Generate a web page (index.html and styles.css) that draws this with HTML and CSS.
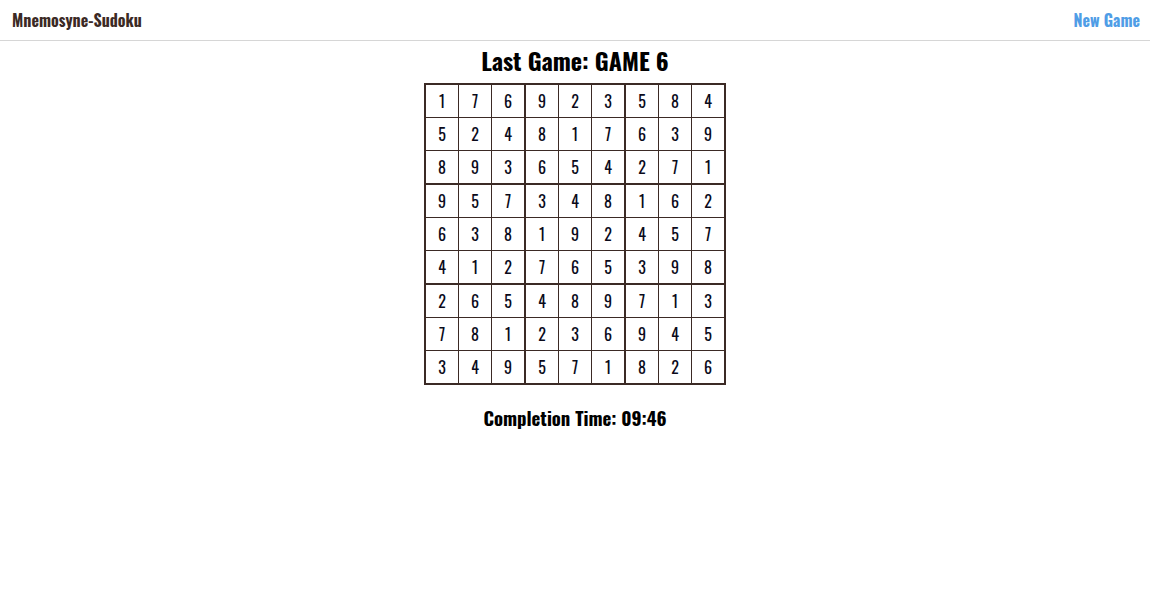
FILE: index.html
```html
<!DOCTYPE html>
<html>
<head>
<meta charset="utf-8">
<link rel="stylesheet" href="styles.css">
</head>
<body>
<nav class="navbar">
  <span class="brand">Mnemosyne-Sudoku</span>
  <a class="new-game" href="#">New Game</a>
</nav>
<main class="main">
  <h1 class="title">Last Game: GAME 6</h1>
  <table class="board">
    <tr><td>1</td><td>7</td><td>6</td><td>9</td><td>2</td><td>3</td><td>5</td><td>8</td><td>4</td></tr>
    <tr><td>5</td><td>2</td><td>4</td><td>8</td><td>1</td><td>7</td><td>6</td><td>3</td><td>9</td></tr>
    <tr class="box-end"><td>8</td><td>9</td><td>3</td><td>6</td><td>5</td><td>4</td><td>2</td><td>7</td><td>1</td></tr>
    <tr><td>9</td><td>5</td><td>7</td><td>3</td><td>4</td><td>8</td><td>1</td><td>6</td><td>2</td></tr>
    <tr><td>6</td><td>3</td><td>8</td><td>1</td><td>9</td><td>2</td><td>4</td><td>5</td><td>7</td></tr>
    <tr class="box-end"><td>4</td><td>1</td><td>2</td><td>7</td><td>6</td><td>5</td><td>3</td><td>9</td><td>8</td></tr>
    <tr><td>2</td><td>6</td><td>5</td><td>4</td><td>8</td><td>9</td><td>7</td><td>1</td><td>3</td></tr>
    <tr><td>7</td><td>8</td><td>1</td><td>2</td><td>3</td><td>6</td><td>9</td><td>4</td><td>5</td></tr>
    <tr><td>3</td><td>4</td><td>9</td><td>5</td><td>7</td><td>1</td><td>8</td><td>2</td><td>6</td></tr>
  </table>
  <p class="time">Completion Time: 09:46</p>
</main>
</body>
</html>
```
FILE: styles.css
```css
html, body {
  margin: 0;
  padding: 0;
  background: #fff;
}
body {
  font-family: "Oswald", "DejaVu Sans Condensed", "Liberation Sans", sans-serif;
  color: #000;
}
.navbar {
  height: 40px;
  border-bottom: 1px solid #d6d6d6;
  display: flex;
  align-items: center;
  justify-content: space-between;
  padding: 0 10px 0 12px;
}
.brand {
  font-size: 16px;
  font-weight: bold;
  color: #3b2a25;
}
.new-game {
  font-size: 16px;
  font-weight: bold;
  color: #4f9de6;
  text-decoration: none;
}
.main {
  display: flex;
  flex-direction: column;
  align-items: center;
}
.title {
  margin: 2px 0 0 0;
  font-size: 24px;
  line-height: 34px;
  font-weight: bold;
}
.board {
  margin-top: 6px;
  border-collapse: collapse;
  border: 2px solid #3b2a25;
}
.board td {
  width: 32px;
  height: 32px;
  padding: 0;
  border: 1px solid #3b2a25;
  text-align: center;
  vertical-align: middle;
  font-size: 16px;
  font-weight: 400;
  color: #0a0a1a;
}
.board td:nth-child(3n) {
  border-right-width: 2px;
}
.board tr.box-end td {
  border-bottom-width: 2px;
}
.time {
  margin: 19px 0 0 0;
  font-size: 18.7px;
  line-height: 28px;
  font-weight: bold;
}
```
